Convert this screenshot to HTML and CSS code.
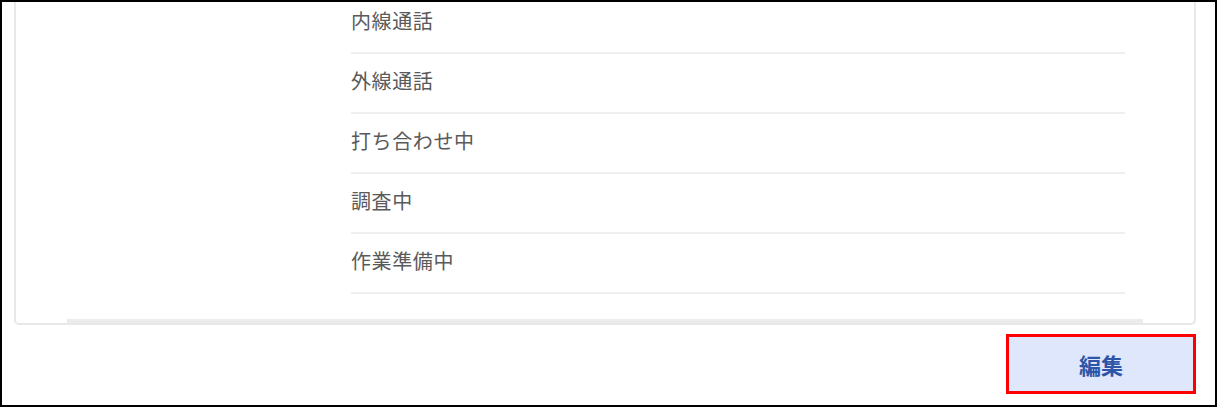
FILE: index.html
```html
<!DOCTYPE html>
<html lang="ja">
<head>
    <meta charset="UTF-8">
    <meta name="viewport" content="width=device-width, initial-scale=1.0">
    <title>ステータス</title>
    <link rel="stylesheet" href="styles.css">
</head>
<body>
<div class="frame">
    <div class="card">
        <ul class="status-list">
            <li>内線通話</li>
            <li>外線通話</li>
            <li>打ち合わせ中</li>
            <li>調査中</li>
            <li>作業準備中</li>
        </ul>
        <div class="scroll-bar"></div>
    </div>
    <div class="actions">
        <button class="edit-btn">編集</button>
    </div>
</div>
</body>
</html>
```

FILE: styles.css
```css
*{
    margin: 0;
    padding: 0;
    box-sizing: border-box;
}
body{
    background: #fff;
    font-family: "Noto Sans CJK JP", "Noto Sans", sans-serif;
}
.frame{
    width: 1217px;
    height: 407px;
    border: 2px solid #000;
    overflow: hidden;
    display: flex;
    flex-direction: column;
}
.card{
    margin: -8px 19px 0 12px;
    border: 2px solid #e8e8e8;
    border-top: none;
    border-radius: 0 0 5px 5px;
}
.status-list{
    list-style: none;
    margin-left: 335px;
    width: 774px;
}
.status-list li{
    padding: 17px 0 21px;
    line-height: 20px;
    font-size: 20px;
    letter-spacing: 0.6px;
    color: #5a5a5a;
    border-bottom: 2px solid #efefef;
}
.scroll-bar{
    height: 4px;
    margin: 25px 51px 0 51px;
    background: #ececec;
}
.actions{
    display: flex;
    justify-content: flex-end;
    margin: 9px 19px 0 0;
}
.edit-btn{
    width: 190px;
    height: 60px;
    border: 3px solid #ff0000;
    background: #dfe7fc;
    color: #2f55a8;
    font-family: "Noto Sans CJK JP", sans-serif;
    font-size: 22px;
    font-weight: bold;
}
```
